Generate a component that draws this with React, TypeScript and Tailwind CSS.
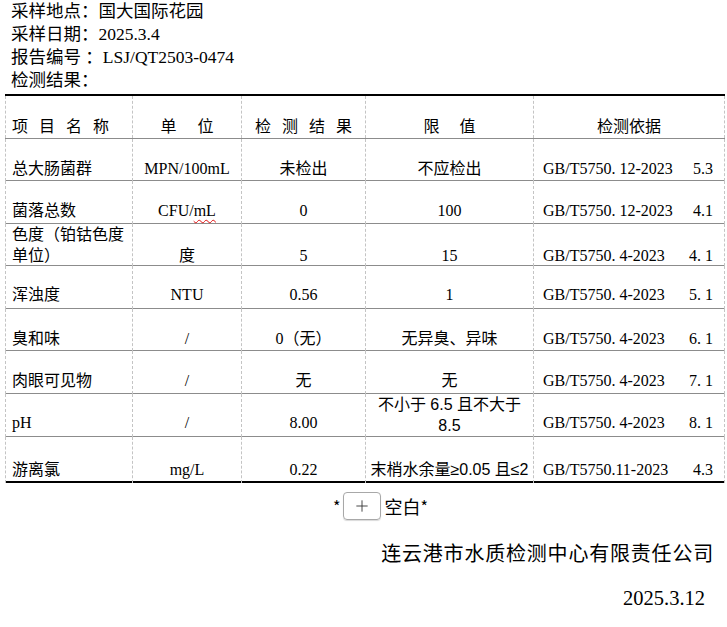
import { Plus } from "lucide-react";

type Row = {
  size: string;
  name: React.ReactNode;
  unit: React.ReactNode;
  result: React.ReactNode;
  limit: React.ReactNode;
  std: string;
  clause: string;
  limitTop?: boolean;
};

const cols = "grid grid-cols-[127px_109px_124px_168px_192px]";
const cell = "flex items-end border-l border-dashed border-[#c4c4c4] leading-[20px]";
const sans = "font-['Liberation_Sans','Noto_Sans_CJK_SC',sans-serif]";

const rows: Row[] = [
  { size: "h-[42px] pb-[2px]", name: "总大肠菌群", unit: "MPN/100mL", result: "未检出", limit: "不应检出", std: "GB/T5750. 12-2023", clause: "5.3" },
  {
    size: "h-[43px] pb-[3px]",
    name: "菌落总数",
    unit: (
      <span>
        CFU/<span className="underline decoration-wavy decoration-[#e01010] decoration-1 underline-offset-[3px]">mL</span>
      </span>
    ),
    result: "0",
    limit: "100",
    std: "GB/T5750. 12-2023",
    clause: "4.1",
  },
  {
    size: "h-[42px] pb-[0px]",
    name: (
      <span className="leading-[21px]">
        色度（铂钴色度
        <br />
        单位）
      </span>
    ),
    unit: "度",
    result: "5",
    limit: "15",
    std: "GB/T5750. 4-2023",
    clause: "4. 1",
  },
  { size: "h-[43px] pb-[4px]", name: "浑浊度", unit: "NTU", result: "0.56", limit: "1", std: "GB/T5750. 4-2023", clause: "5. 1" },
  { size: "h-[42px] pb-[2px]", name: "臭和味", unit: "/", result: "0（无）", limit: "无异臭、异味", std: "GB/T5750. 4-2023", clause: "6. 1" },
  { size: "h-[43px] pb-[3px]", name: "肉眼可见物", unit: "/", result: "无", limit: "无", std: "GB/T5750. 4-2023", clause: "7. 1" },
  {
    size: "h-[43px] pb-[4px]",
    name: "pH",
    unit: "/",
    result: "8.00",
    limit: (
      <span className={`${sans} text-center leading-[21px]`}>
        不小于 6.5 且不大于
        <br />
        8.5
      </span>
    ),
    limitTop: true,
    std: "GB/T5750. 4-2023",
    clause: "8. 1",
  },
  {
    size: "h-[46px] pb-[3px]",
    name: "游离氯",
    unit: "mg/L",
    result: "0.22",
    limit: <span className={`${sans} whitespace-nowrap`}>末梢水余量≥0.05 且≤2</span>,
    std: "GB/T5750.11-2023",
    clause: "4.3",
  },
];

export default function App() {
  return (
    <div className="min-h-[627px] w-[727px] bg-white text-black font-['Liberation_Serif','Noto_Sans_CJK_SC',serif]">
      <div className="pl-[11px] text-[17.5px] leading-[23px] h-[94px]">
        <div>采样地点：国大国际花园</div>
        <div>采样日期：2025.3.4</div>
        <div>报告编号 ：LSJ/QT2503-0474</div>
        <div>检测结果：</div>
      </div>

      <div className="ml-[5px] w-[720px] text-[16px]">
        <div className="h-[2px] bg-black" />
        <div className={`${cols} h-[43px] border-b border-[#8c8c8c]`}>
          <div className={`${cell} justify-start pl-[6px] pb-[1px] tracking-[11px]`}>项目名称</div>
          <div className={`${cell} justify-center pb-[1px] gap-[21px]`}>
            <span>单</span>
            <span>位</span>
          </div>
          <div className={`${cell} justify-center pb-[1px] tracking-[11px] pl-[11px]`}>检测结果</div>
          <div className={`${cell} justify-center pb-[1px] gap-[20px]`}>
            <span>限</span>
            <span>值</span>
          </div>
          <div className={`${cell} justify-center pb-[1px] border-r`}>检测依据</div>
        </div>

        {rows.map((r, i) => (
          <div
            key={i}
            className={`${cols} ${r.size.split(" ")[0]} ${
              i === rows.length - 1 ? "border-b-2 border-black" : "border-b border-[#8c8c8c]"
            }`}
          >
            <div className={`${cell} ${r.size} justify-start pl-[6px]`}>{r.name}</div>
            <div className={`${cell} ${r.size} justify-center`}>{r.unit}</div>
            <div className={`${cell} ${r.size} justify-center`}>{r.result}</div>
            {r.limitTop ? (
              <div className="flex items-start justify-center border-l border-dashed border-[#c4c4c4]">
                {r.limit}
              </div>
            ) : (
              <div className={`${cell} ${r.size} justify-center`}>{r.limit}</div>
            )}
            <div className={`${cell} ${r.size} border-r justify-between pl-[9px] pr-[11px]`}>
              <span>{r.std}</span>
              <span>{r.clause}</span>
            </div>
          </div>
        ))}
      </div>

      <div className="flex items-center pl-[333px] mt-[9px] text-[18px] font-['Noto_Sans_CJK_SC',sans-serif] leading-[28px]">
        <span className="text-[16px]">*</span>
        <span className="mx-[3px] flex h-[28px] w-[38px] items-center justify-center rounded-[4px] border border-[#a8a8a8] shadow-[0_1px_1px_rgba(0,0,0,0.15)]">
          <Plus size={18} strokeWidth={1.2} color="#333" />
        </span>
        <span>空白</span>
        <span className="text-[16px]">*</span>
      </div>

      <div className="mt-[20px] pr-[13px] text-right text-[20px] leading-[26px] tracking-[0.8px] font-['Noto_Sans_CJK_SC',sans-serif]">
        连云港市水质检测中心有限责任公司
      </div>

      <div className="mt-[19px] pr-[22px] text-right text-[20.5px] leading-[26px]">2025.3.12</div>
    </div>
  );
}
